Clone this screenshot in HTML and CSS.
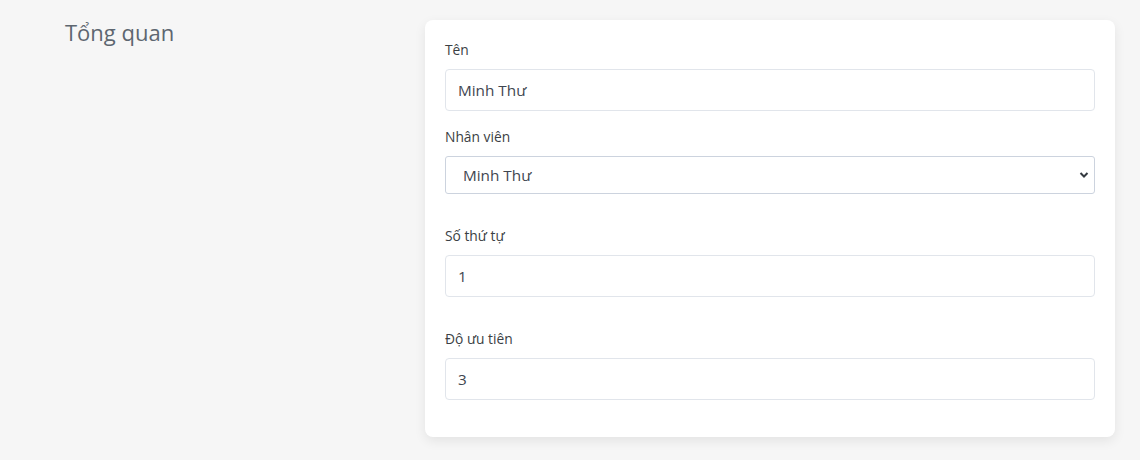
FILE: index.html
```html
<!DOCTYPE html>
<html lang="vi">
<head>
    <meta charset="UTF-8">
    <meta name="viewport" content="width=device-width, initial-scale=1.0">
    <title>Tổng quan</title>
    <link rel="stylesheet" href="styles.css">
</head>
<body>
    <div class="page">
        <div class="side">
            <h3 class="section-title">Tổng quan</h3>
        </div>
        <div class="card">
            <div class="form-group">
                <label class="form-label">Tên</label>
                <input class="form-control" type="text" value="Minh Thư">
            </div>
            <div class="form-group form-group-lg">
                <label class="form-label">Nhân viên</label>
                <div class="select-wrap">
                    <select class="form-select">
                        <option selected>Minh Thư</option>
                    </select>
                    <svg class="select-arrow" width="10" height="8" viewBox="0 0 10 8">
                        <path d="M1.5 2 L5 5.5 L8.5 2" fill="none" stroke="#343a40" stroke-width="2"/>
                    </svg>
                </div>
            </div>
            <div class="form-group form-group-lg">
                <label class="form-label">Số thứ tự</label>
                <input class="form-control" type="text" value="1">
            </div>
            <div class="form-group">
                <label class="form-label">Độ ưu tiên</label>
                <input class="form-control" type="text" value="3">
            </div>
        </div>
    </div>
</body>
</html>
```

FILE: styles.css
```css
/* Nền trang và font chung */
body {
    margin: 0;
    background: #f6f6f6;
    font-family: 'Open Sans', Lato, sans-serif;
    color: #444;
}

.page {
    display: flex;
    align-items: flex-start;
    padding: 20px 25px 24px 0;
}

.side {
    width: 425px;
    flex-shrink: 0;
    padding-left: 65px;
    box-sizing: border-box;
}

.section-title {
    margin: 0;
    font-size: 22px;
    font-weight: 400;
    color: #5d6670;
    line-height: 24px;
}

/* Card trắng chứa form */
.card {
    flex: 1;
    background: #fff;
    border-radius: 8px;
    padding: 20px 20px 21px;
    box-shadow: 0 4px 12px rgba(0, 0, 0, 0.08);
}

.form-group {
    margin-bottom: 16px;
}
.form-group-lg {
    margin-bottom: 32px;
}

.form-label {
    display: block;
    font-size: 13.8px;
    line-height: 20px;
    color: #3b3f44;
    margin-bottom: 9px;
}

.form-control,
.form-select {
    display: block;
    width: 100%;
    box-sizing: border-box;
    font-family: inherit;
    font-size: 15.3px;
    color: #3f4650;
    background: #fff;
    outline: none;
}

.form-control {
    height: 42px;
    padding: 0 12px;
    border: 1px solid #e1e5eb;
    border-radius: 4px;
}

.select-wrap {
    position: relative;
}
.form-select {
    height: 38px;
    padding: 0 17px;
    border: 1px solid #ccd3de;
    border-radius: 3px;
    appearance: none;
    -webkit-appearance: none;
}
.select-arrow {
    position: absolute;
    right: 6px;
    top: 15px;
    pointer-events: none;
}
```
